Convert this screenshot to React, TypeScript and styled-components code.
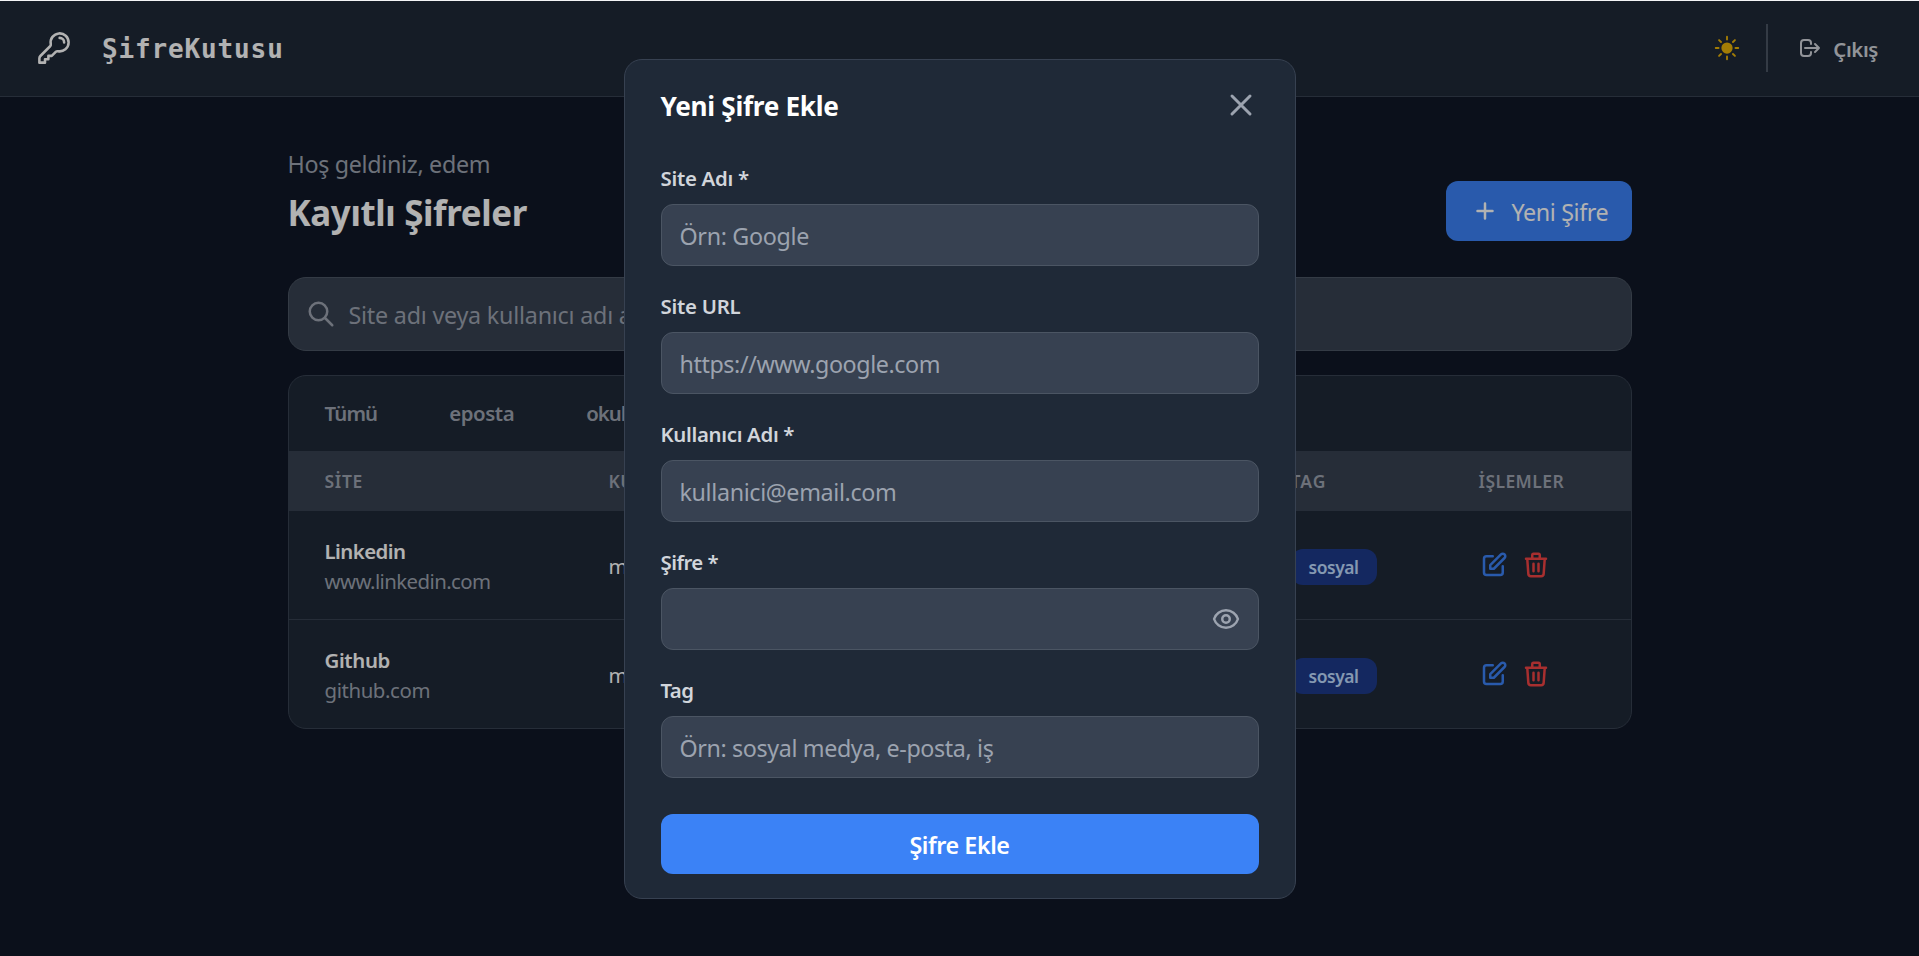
import React from "react";
import styled, { createGlobalStyle } from "styled-components";
import { HiOutlineKey, HiSun } from "react-icons/hi2";
import {
  HiOutlineEye,
  HiOutlineLogout,
  HiOutlinePencilAlt,
  HiOutlineSearch,
  HiOutlineTrash,
  HiOutlineX,
} from "react-icons/hi";

const GlobalStyle = createGlobalStyle`
  *, *::before, *::after { box-sizing: border-box; }
  body {
    margin: 0;
    background: #111827;
    color: #ffffff;
    font-family: "Noto Sans", "Open Sans", sans-serif;
  }
  button, input { font: inherit; color: inherit; }
  h1, h2, p { margin: 0; }
  svg { display: block; flex: none; }
`;

/* Single line of text with a fixed box height. */
const Text = styled.span<{
  $size: number;
  $line: number;
  $weight?: number;
  $color?: string;
  $track?: number;
}>`
  display: block;
  height: ${(p) => p.$line}px;
  line-height: ${(p) => p.$line + 2}px;
  font-size: ${(p) => p.$size}px;
  font-weight: ${(p) => p.$weight ?? 400};
  color: ${(p) => p.$color ?? "#ffffff"};
  letter-spacing: ${(p) => p.$track ?? 0}px;
  white-space: nowrap;
`;

const Page = styled.div`
  height: 956px;
  overflow: hidden;
  border-top: 1px solid #f3f4f6;
  background: #111827;
`;

const Navbar = styled.header`
  display: flex;
  align-items: center;
  justify-content: space-between;
  height: 96px;
  padding: 0 38px 1px 36px;
  background: #1f2937;
  border-bottom: 1px solid #374151;
`;

const Brand = styled.div`
  display: flex;
  align-items: center;
  gap: 30px;

  svg { stroke-width: 1.7; }
`;

const BrandName = styled.span`
  padding-top: 2px;
  font-family: "DejaVu Sans Mono", "Liberation Mono", monospace;
  font-size: 26px;
  font-weight: 700;
  line-height: 42px;
  letter-spacing: 0.86px;
`;

const NavActions = styled.div`
  display: flex;
  align-items: center;
  padding-bottom: 1px;
`;

const ThemeButton = styled.button`
  display: flex;
  padding: 0;
  border: 0;
  background: none;
  color: #eab308;
`;

const LogoutButton = styled.button`
  display: flex;
  align-items: center;
  gap: 11px;
  margin-left: 24px;
  padding: 9px 3px 9px 30px;
  border: 0;
  border-left: 2px solid #4b5563;
  background: none;
  color: #d1d5db;
`;

const Main = styled.main`
  width: 1344px;
  margin: 0 auto;
  padding-top: 48px;
`;

const Heading = styled.div`
  display: flex;
  justify-content: space-between;
  height: 132px;
  padding-bottom: 36px;
`;

const HeadingTexts = styled.div`
  display: flex;
  flex-direction: column;
  gap: 7px;
`;

const NewButton = styled.button`
  align-self: flex-end;
  display: flex;
  align-items: center;
  gap: 12px;
  width: 186px;
  height: 60px;
  padding: 0 24px;
  border: 0;
  border-radius: 12px;
  background: #3b82f6;
`;

const SearchBox = styled.div`
  display: flex;
  align-items: center;
  gap: 13px;
  height: 74px;
  padding: 0 17px;
  border: 1px solid #4b5563;
  border-radius: 18px;
  background: #374151;
  color: #9ca3af;
`;

const SearchInput = styled.input`
  flex: 1;
  height: 36px;
  padding: 2px 0 0;
  border: 0;
  outline: 0;
  background: none;
  font-size: 23.3px;
  letter-spacing: -0.22px;
  &::placeholder { color: #9ca3af; opacity: 1; }
`;

const Card = styled.section`
  margin-top: 24px;
  overflow: hidden;
  border: 1px solid #374151;
  border-radius: 18px;
  background: #1f2937;
`;

const Tabs = styled.nav`
  display: flex;
  align-items: center;
  gap: 72px;
  height: 75px;
  padding: 0 36px 3px;
`;

const TableRow = styled.div<{ $head?: boolean }>`
  display: grid;
  grid-template-columns: 284px 682px 188px 1fr;
  align-items: center;
  height: ${(p) => (p.$head ? 60 : 108)}px;
  padding: 0 36px ${(p) => (p.$head ? 2 : 0)}px;
  background: ${(p) => (p.$head ? "#374151" : "transparent")};
`;

const TableBody = styled.div`
  & > * + * {
    height: 109px;
    border-top: 1px solid #374151;
  }
`;

const Badge = styled.span`
  display: flex;
  align-items: center;
  justify-content: center;
  width: 86px;
  height: 36px;
  margin-top: 3px;
  padding-bottom: 1px;
  border-radius: 12px;
  background: #1e3a8a;
`;

const RowActions = styled.div`
  display: flex;
  gap: 12px;
`;

const IconButton = styled.button<{ $color: string }>`
  display: flex;
  padding: 0;
  border: 0;
  background: none;
  color: ${(p) => p.$color};
`;

const Overlay = styled.div`
  position: fixed;
  inset: 1px 0 0;
  display: flex;
  align-items: flex-start;
  justify-content: center;
  padding-top: 58px;
  background: rgba(0, 0, 0, 0.3);
`;

const Modal = styled.div`
  width: 672px;
  height: 840px;
  padding: 24px 36px;
  border: 1px solid #374151;
  border-radius: 18px;
  background: #1f2937;
`;

const ModalHeader = styled.div`
  display: flex;
  align-items: center;
  justify-content: space-between;
  margin-bottom: 36px;
`;

const Form = styled.div`
  display: flex;
  flex-direction: column;
  gap: 24px;
`;

const Field = styled.label`
  display: flex;
  flex-direction: column;
  gap: 12px;
`;

const InputBox = styled.span`
  display: flex;
  align-items: center;
  height: 62px;
  padding: 0 17px 0 18px;
  border: 1px solid #4b5563;
  border-radius: 12px;
  background: #374151;
`;

const Input = styled.input<{ $track: number }>`
  flex: 1;
  min-width: 0;
  height: 38px;
  padding: 1px 0 0;
  border: 0;
  outline: 0;
  background: none;
  font-size: 23.3px;
  letter-spacing: ${(p) => p.$track}px;
  &::placeholder { color: #9ca3af; opacity: 1; }
`;

const SubmitButton = styled.button`
  display: flex;
  align-items: center;
  justify-content: center;
  height: 60px;
  margin-top: 12px;
  border: 0;
  border-radius: 12px;
  background: #3b82f6;
`;

const PlusIcon = () => (
  <svg width="30" height="30" viewBox="0 0 24 24" fill="none" stroke="#fff" strokeWidth="2" strokeLinecap="round">
    <path d="M12 6v12M6 12h12" />
  </svg>
);

const tabs = [
  { name: "Tümü", track: -0.85 },
  { name: "eposta", track: -0.45 },
  { name: "okul", track: -1 },
];

const entries = [
  { name: "Linkedin", nameTrack: -0.56, url: "www.linkedin.com", urlTrack: -0.58, user: "m", tag: "sosyal" },
  { name: "Github", nameTrack: -0.36, url: "github.com", urlTrack: -0.4, user: "m", tag: "sosyal" },
];

const fields = [
  { label: "Site Adı *", labelTrack: -0.28, hint: "Örn: Google", track: -0.33 },
  { label: "Site URL", labelTrack: -0.25, hint: "https://www.google.com", track: -0.42 },
  { label: "Kullanıcı Adı *", labelTrack: -0.32, hint: "kullanici@email.com", track: -0.36 },
  { label: "Şifre *", labelTrack: -0.55, hint: "", track: 0, secret: true },
  { label: "Tag", labelTrack: -0.6, hint: "Örn: sosyal medya, e-posta, iş", track: -0.39 },
];

export default function App() {
  return (
    <>
      <GlobalStyle />
      <Page>
        <Navbar>
          <Brand>
            <HiOutlineKey size={36} />
            <BrandName>ŞifreKutusu</BrandName>
          </Brand>
          <NavActions>
            <ThemeButton>
              <HiSun size={30} />
            </ThemeButton>
            <LogoutButton>
              <HiOutlineLogout size={24} />
              <Text $size={20.4} $line={30} $weight={600} $color="#d1d5db" $track={-0.37}>Çıkış</Text>
            </LogoutButton>
          </NavActions>
        </Navbar>

        <Main>
          <Heading>
            <HeadingTexts>
              <Text as="p" $size={23.3} $line={36} $color="#9ca3af" $track={-0.32}>Hoş geldiniz, edem</Text>
              <Text as="h1" $size={34.9} $line={48} $weight={700} $track={-0.35}>Kayıtlı Şifreler</Text>
            </HeadingTexts>
            <NewButton>
              <PlusIcon />
              <Text $size={23.3} $line={36} $track={-0.4}>Yeni Şifre</Text>
            </NewButton>
          </Heading>

          <SearchBox>
            <HiOutlineSearch size={30} />
            <SearchInput placeholder="Site adı veya kullanıcı adı ara..." />
          </SearchBox>

          <Card>
            <Tabs>
              {tabs.map((t) => (
                <Text key={t.name} $size={20.4} $line={30} $weight={600} $color="#9ca3af" $track={t.track}>{t.name}</Text>
              ))}
            </Tabs>
            <TableRow $head>
              <Text $size={17.5} $line={24} $weight={600} $color="#9ca3af" $track={0.65}>SİTE</Text>
              <Text $size={17.5} $line={24} $weight={600} $color="#9ca3af" $track={0.4}>KULLANICI ADI</Text>
              <Text $size={17.5} $line={24} $weight={600} $color="#9ca3af" $track={1}>TAG</Text>
              <Text $size={17.5} $line={24} $weight={600} $color="#9ca3af" $track={0.42}>İŞLEMLER</Text>
            </TableRow>
            <TableBody>
              {entries.map((e) => (
                <TableRow key={e.name}>
                  <div>
                    <Text $size={20.4} $line={30} $weight={600} $track={e.nameTrack}>{e.name}</Text>
                    <Text $size={20.4} $line={30} $color="#9ca3af" $track={e.urlTrack}>{e.url}</Text>
                  </div>
                  <Text $size={20.4} $line={30}>{e.user}</Text>
                  <Badge>
                    <Text $size={17.5} $line={24} $weight={600} $color="#bfdbfe" $track={-0.5}>{e.tag}</Text>
                  </Badge>
                  <RowActions>
                    <IconButton $color="#3b82f6"><HiOutlinePencilAlt size={30} /></IconButton>
                    <IconButton $color="#ef4444"><HiOutlineTrash size={30} /></IconButton>
                  </RowActions>
                </TableRow>
              ))}
            </TableBody>
          </Card>
        </Main>
      </Page>

      <Overlay>
        <Modal>
          <ModalHeader>
            <Text as="h2" $size={26.2} $line={42} $weight={700} $track={-0.31}>Yeni Şifre Ekle</Text>
            <IconButton $color="#9ca3af"><HiOutlineX size={36} /></IconButton>
          </ModalHeader>
          <Form>
            {fields.map((f) => (
              <Field key={f.label}>
                <Text $size={20.4} $line={30} $weight={600} $color="#d1d5db" $track={f.labelTrack}>{f.label}</Text>
                <InputBox>
                  <Input placeholder={f.hint} $track={f.track} />
                  {f.secret && <IconButton as="span" $color="#9ca3af"><HiOutlineEye size={30} /></IconButton>}
                </InputBox>
              </Field>
            ))}
            <SubmitButton>
              <Text $size={23.3} $line={36} $weight={600} $track={-0.41}>Şifre Ekle</Text>
            </SubmitButton>
          </Form>
        </Modal>
      </Overlay>
    </>
  );
}
